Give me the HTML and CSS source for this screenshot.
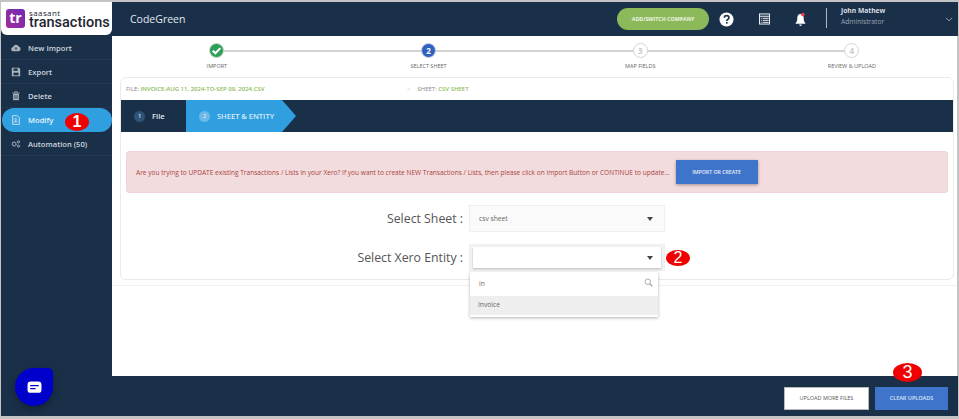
FILE: index.html
```html
<!DOCTYPE html>
<html lang="en">
<head>
    <meta charset="UTF-8">
    <title>SaasAnt Transactions</title>
    <link rel="stylesheet" href="styles.css">
</head>
<body>
    <div class="app">
        <header class="topbar">
            <div class="logo">
                <span class="logo_mark">tr</span>
                <div class="logo_text">
                    <span class="logo_small">saasant</span>
                    <span class="logo_big">transactions</span>
                </div>
            </div>
            <div class="company">CodeGreen</div>
            <button class="btn_switch">ADD/SWITCH COMPANY</button>
            <svg class="top_icon icon_help" viewBox="0 0 16 16"><circle cx="8" cy="8" r="7.5" fill="#fff"/><path d="M5.6 6.2C5.7 4.6 6.8 3.9 8.1 3.9c1.400 0 2.500.8 2.500 2.100 0 1.900-2.300 1.800-2.300 3.600" fill="none" stroke="#1a3049" stroke-width="1.700"/><rect x="7.400" y="10.600" width="1.800" height="1.800" fill="#1a3049"/></svg>
            <svg class="top_icon icon_list" viewBox="0 0 12 12"><rect x=".5" y=".5" width="11" height="11" fill="#1a3049" stroke="#fff"/><path d="M1 3h10M4 5.200h6.500M4 7.400h6.500M4 9.600h6.500M2 5.200h1M2 7.400h1M2 9.600h1" stroke="#fff" stroke-width="1"/></svg>
            <svg class="top_icon icon_bell" viewBox="0 0 12 16"><path d="M6 2C3.500 2 2.500 4 2.500 6.500c0 2.500-.5 4-1.800 5.300v.7h10.600v-.7C10 10.500 9.500 9 9.500 6.500 9.500 4 8.500 2 6 2z" fill="#fff"/><path d="M4.500 13.500a1.500 1.500 0 0 0 3 0z" fill="#fff"/><circle cx="8.500" cy="2.500" r="2" fill="#ef4150"/></svg>
            <div class="user">
                <div class="user_name">John Mathew</div>
                <div class="user_role">Administrator</div>
            </div>
            <svg class="user_arrow" viewBox="0 0 10 6"><path d="M1 1l4 3.600L9 1" fill="none" stroke="#aeb8c4" stroke-width="1"/></svg>
        </header>

        <div class="middle">
            <nav class="sidebar">
                <a class="menu_item">
                    <svg class="menu_icon" viewBox="0 0 14 12"><path d="M3.500 10.500a3 3 0 0 1-.5-6A4 4 0 0 1 10.700 4a3.300 3.300 0 0 1 0 6.500z" fill="#aab4bf"/><path d="M7 9V5.500M5.400 7L7 5.300 8.600 7" fill="none" stroke="#1a3049" stroke-width="1.100"/></svg>
                    New Import
                </a>
                <a class="menu_item">
                    <svg class="menu_icon" viewBox="0 0 12 12"><path d="M1 1h8.500L11 2.500V11H1z" fill="#aab4bf"/><rect x="3" y="1.800" width="5" height="2.800" fill="#1a3049"/><rect x="3" y="6.800" width="6" height="3.200" fill="#1a3049"/></svg>
                    Export
                </a>
                <a class="menu_item">
                    <svg class="menu_icon" viewBox="0 0 12 12"><path d="M1.500 2.500h9M4.500 2.500V1h3v1.500" fill="none" stroke="#aab4bf"/><path d="M2.500 3.500h7V11h-7z" fill="#aab4bf"/><path d="M4.500 5v4.500M6 5v4.500M7.500 5v4.500" stroke="#1a3049" stroke-width=".7"/></svg>
                    Delete
                </a>
                <a class="menu_item active">
                    <svg class="menu_icon" viewBox="0 0 12 12"><path d="M2 .8h5.500L10 3.300v7.900H2z" fill="none" stroke="#dfeaf5"/><path d="M3.800 9V7M5.500 9V5.500M7.200 9V6.500M3.500 5.500L5.500 4l2 1.500" fill="none" stroke="#dfeaf5" stroke-width=".9"/></svg>
                    Modify
                </a>
                <a class="menu_item">
                    <svg class="menu_icon" viewBox="0 0 14 12"><circle cx="4.500" cy="6" r="2.600" fill="none" stroke="#aab4bf" stroke-width="1.800" stroke-dasharray="1.500 .6"/><circle cx="10.500" cy="3" r="1.500" fill="none" stroke="#aab4bf" stroke-width="1.300"/><circle cx="10.500" cy="9" r="1.500" fill="none" stroke="#aab4bf" stroke-width="1.300"/></svg>
                    Automation (50)
                </a>
                <div class="chat_bubble">
                    <svg viewBox="0 0 14 12"><rect x=".5" y=".5" width="13" height="10.500" rx="3" fill="#fff"/><path d="M3 4.200h8M3 7h5" stroke="#0000cc" stroke-width="1.300"/></svg>
                </div>
            </nav>

            <main class="content">
                <div class="wizard">
                    <div class="steps">
                        <div class="step">
                            <div class="step_circle done">
                                <svg viewBox="0 0 12 12"><path d="M2.500 6.200l2.500 2.400 4.500-4.800" fill="none" stroke="#fff" stroke-width="2"/></svg>
                            </div>
                            <div class="step_label">IMPORT</div>
                        </div>
                        <div class="step">
                            <div class="step_circle current">2</div>
                            <div class="step_label">SELECT SHEET</div>
                        </div>
                        <div class="step">
                            <div class="step_circle">3</div>
                            <div class="step_label">MAP FIELDS</div>
                        </div>
                        <div class="step last">
                            <div class="step_circle">4</div>
                            <div class="step_label">REVIEW &amp; UPLOAD</div>
                        </div>
                    </div>

                    <section class="card">
                        <div class="crumbs">
                            <div class="crumb_file">FILE: <b>INVOICE-AUG 11, 2024-TO-SEP 09, 2024.CSV</b></div>
                            <div class="crumb_sheet"><i>&gt;</i>SHEET: <b>CSV SHEET</b></div>
                        </div>
                        <div class="tabs">
                            <div class="tab"><span class="tab_num">1</span>File</div>
                            <div class="tab tab_active"><span class="tab_num">2</span>SHEET &amp; ENTITY</div>
                        </div>
                        <div class="alert">
                            <span>Are you trying to UPDATE existing Transactions / Lists in your Xero? If you want to create NEW Transactions / Lists, then please click on Import Button or CONTINUE to update...</span>
                            <button class="btn_import">IMPORT OR CREATE</button>
                        </div>
                        <div class="form_row">
                            <label>Select Sheet :</label>
                            <div class="select">csv sheet<span class="caret"></span></div>
                        </div>
                        <div class="form_row">
                            <label>Select Xero Entity :</label>
                            <div class="select select_open">
                                <div class="select_inner"><span class="caret"></span></div>
                                <div class="dropdown">
                                    <div class="search">in
                                        <svg viewBox="0 0 12 12"><circle cx="5" cy="5" r="3.700" fill="none" stroke="#999" stroke-width="1.100"/><path d="M7.800 7.800L11 11" stroke="#999" stroke-width="1.600"/></svg>
                                    </div>
                                    <div class="option">Invoice</div>
                                </div>
                            </div>
                        </div>
                    </section>
                </div>
            </main>
        </div>

        <footer class="bottombar">
            <button class="btn_more">UPLOAD MORE FILES</button>
            <button class="btn_clear">CLEAR UPLOADS</button>
        </footer>

        <span class="marker marker_one">1</span>
        <span class="marker marker_two">2</span>
        <span class="marker marker_three">3</span>
    </div>
</body>
</html>
```

FILE: styles.css
```css
* {
    box-sizing: border-box;
}

body {
    margin: 0;
    background: #c4c4c4;
    font-family: 'Open Sans', sans-serif;
    color: #333;
}

button {
    font-family: 'Open Sans', sans-serif;
    border: none;
    cursor: pointer;
}

.app {
    position: relative;
    width: 958px;
    height: 419px;
    padding: 2px 0 3px 1px;
    display: flex;
    flex-direction: column;
    overflow: hidden;
}

/* top bar */
.topbar {
    height: 34px;
    flex: none;
    background-color: #1a3049;
    display: flex;
    align-items: center;
    color: #fff;
}

.logo {
    width: 111px;
    height: 33px;
    align-self: flex-start;
    background-color: #fff;
    border-radius: 0 0 6px 6px;
    display: flex;
    align-items: center;
    padding-left: 5px;
    gap: 4px;
}

.logo_mark {
    width: 19px;
    height: 19px;
    background: linear-gradient(45deg, #a32a9c, #6f2cb5);
    border-radius: 3px;
    color: #fff;
    font-size: 14px;
    font-weight: 700;
    line-height: 18px;
    text-align: center;
}

.logo_text {
    display: flex;
    flex-direction: column;
    color: #1d2530;
}

.logo_small {
    font-size: 8px;
    line-height: 8px;
    letter-spacing: .4px;
}

.logo_big {
    font-family: 'Roboto', sans-serif;
    font-size: 14.500px;
    font-weight: 500;
    line-height: 11px;
}

.company {
    margin-left: 18px;
    font-size: 10.500px;
    color: #e4e8ed;
    flex: 1;
}

.btn_switch {
    width: 92px;
    height: 22px;
    margin-right: 10px;
    border-radius: 11px;
    background-color: #8cb95a;
    color: #eef5e4;
    font-size: 5.300px;
    font-weight: 700;
    padding: 0;
}

.top_icon {
    flex: none;
}

.icon_help {
    width: 15px;
    height: 15px;
    margin-right: 25px;
}

.icon_list {
    width: 11px;
    height: 12px;
    margin-right: 25px;
}

.icon_bell {
    width: 11px;
    height: 15px;
    margin-right: 20px;
}

.user {
    border-left: 1px solid #aeb8c4;
    height: 20px;
    padding-left: 14px;
    width: 119px;
    margin-top: -2px;
    font-size: 6.700px;
}

.user_name {
    font-weight: 700;
    color: #d9dfe6;
    line-height: 8px;
    margin-top: -1px;
}

.user_role {
    color: #9ba6b3;
    line-height: 8px;
    margin-top: 3px;
}

.user_arrow {
    width: 8px;
    height: 5px;
    margin-right: 5px;
    flex: none;
}

/* sidebar and content */
.middle {
    flex: 1;
    display: flex;
    min-height: 0;
}

.sidebar {
    position: relative;
    width: 111px;
    flex: none;
    background-color: #1a3049;
}

.menu_item {
    height: 24px;
    display: flex;
    align-items: center;
    padding-left: 10px;
    gap: 7px;
    font-size: 7.600px;
    font-weight: 600;
    color: #cdd5de;
    border-bottom: 1px solid #22384f;
}

.menu_item.active {
    margin-left: 1px;
    padding-left: 9px;
    background-color: #2f9fe0;
    border-radius: 12px;
    color: #e6f3fb;
    border-bottom: none;
}

.menu_icon {
    width: 10px;
    height: 10px;
    flex: none;
}

.chat_bubble {
    position: absolute;
    left: 14px;
    bottom: -30px;
    width: 38px;
    height: 38px;
    border-radius: 19px 5px 19px 19px;
    background-color: #0000cc;
    box-shadow: 0 3px 6px rgba(0, 0, 0, .3);
    display: flex;
    align-items: center;
    justify-content: center;
}

.chat_bubble svg {
    width: 15px;
    height: 13px;
}

.content {
    flex: 1;
    min-width: 0;
    background-color: #fff;
    border-right: 1px solid #c4c4c4;
}

.wizard {
    height: 250px;
    padding: 0 3px 0 8px;
    border-bottom: 1px solid #f1f1f1;
}

/* progress steps */
.steps {
    height: 41px;
    display: grid;
    grid-template-columns: repeat(4, 211.700px);
    margin-left: -9px;
}

.step {
    position: relative;
    display: flex;
    flex-direction: column;
    align-items: center;
    padding-top: 7px;
}

.step::after {
    content: '';
    position: absolute;
    top: 14px;
    left: 50%;
    width: 100%;
    height: 2px;
    background-color: #d2d2d2;
}

.step.last::after {
    display: none;
}

.step_circle {
    position: relative;
    z-index: 1;
    width: 15px;
    height: 15px;
    border-radius: 50%;
    background-color: #fff;
    border: 1px solid #d5d5d5;
    color: #c9c9c9;
    font-size: 8px;
    font-weight: 700;
    line-height: 13px;
    text-align: center;
}

.step_circle.done {
    background-color: #2e9e57;
    border: 1px solid #c9d8cd;
}

.step_circle.done svg {
    display: block;
    width: 13px;
    height: 13px;
}

.step_circle.current {
    background-color: #2f62bd;
    border-color: #c9d3e8;
    color: #fff;
}

.step_label {
    margin-top: 4px;
    font-size: 5.500px;
    color: #666;
    line-height: 8px;
}

/* main card */
.card {
    height: 203px;
    border: 1px solid #eaeaea;
    border-radius: 6px;
    position: relative;
}

.crumbs {
    height: 22px;
    display: flex;
    align-items: center;
    padding-left: 5px;
    font-size: 6px;
    color: #888;
}

.crumbs b {
    font-weight: 600;
    color: #8cb95a;
}

.crumb_file {
    width: 281px;
}

.crumb_sheet i {
    font-style: normal;
    color: #bbb;
    margin-right: 7px;
}

.tabs {
    height: 32px;
    background-color: #1a3049;
    display: flex;
}

.tab {
    width: 65px;
    display: flex;
    align-items: center;
    padding-left: 13px;
    font-size: 7.600px;
    font-weight: 600;
    color: #e2e7ec;
}

.tab_active {
    position: relative;
    width: 96px;
    background-color: #2f9fe0;
    font-size: 7.500px;
    color: #d8ecf8;
}

.tab_active::after {
    content: '';
    position: absolute;
    left: 100%;
    top: 0;
    border-left: 14px solid #2f9fe0;
    border-top: 16px solid transparent;
    border-bottom: 16px solid transparent;
}

.tab_num {
    width: 11px;
    height: 11px;
    border-radius: 50%;
    background-color: #2f5379;
    color: #dfe6ee;
    font-size: 5.500px;
    line-height: 11px;
    text-align: center;
    margin-right: 7px;
}

.tab_active .tab_num {
    background-color: #6bb9e8;
}

.alert {
    margin: 19px 5px 12px 5px;
    height: 42px;
    display: flex;
    align-items: center;
    padding-left: 9px;
    background-color: #f3dcde;
    border: 1px solid #f0d4d7;
    border-radius: 3px;
    font-size: 6.570px;
    color: #a94442;
}

.btn_import {
    width: 82px;
    height: 24px;
    margin-left: 6px;
    flex: none;
    background-color: #3f74cb;
    color: #e8eff9;
    font-size: 5.200px;
    font-weight: 600;
    padding: 0;
    box-shadow: 0 1px 3px rgba(0, 0, 0, .35);
}

.form_row {
    display: flex;
    align-items: center;
    height: 27px;
    margin-bottom: 12px;
}

.form_row label {
    width: 342px;
    text-align: right;
    font-size: 12.300px;
    color: #555;
    margin-right: 6px;
}

.select {
    position: relative;
    width: 196px;
    height: 27px;
    padding-left: 9px;
    line-height: 26px;
    background-color: #fafafa;
    border: 1px solid #efefef;
    font-size: 6.700px;
    color: #666;
}

.caret {
    position: absolute;
    top: 11px;
    right: 11px;
    border-top: 4px solid #444;
    border-left: 3px solid transparent;
    border-right: 3px solid transparent;
}

.select_open {
    background-color: #f3f3f3;
    padding: 2px 3px;
}

.select_inner {
    position: relative;
    height: 21px;
    background-color: #fff;
    box-shadow: 0 1px 2px rgba(0, 0, 0, .25);
}

.select_inner .caret {
    top: 9px;
    right: 8px;
}

.dropdown {
    position: absolute;
    z-index: 2;
    top: 27px;
    left: 0;
    width: 188px;
    height: 45px;
    background-color: #fff;
    box-shadow: 0 1px 3px rgba(0, 0, 0, .3);
}

.search {
    position: relative;
    height: 24px;
    padding-left: 9px;
    line-height: 24px;
}

.search svg {
    position: absolute;
    top: 6px;
    right: 5px;
    width: 9px;
    height: 9px;
}

.option {
    height: 19px;
    padding-left: 8px;
    line-height: 18px;
    background-color: #eeeeee;
}

/* bottom bar */
.bottombar {
    height: 40px;
    flex: none;
    background-color: #1a3049;
    display: flex;
    align-items: center;
    justify-content: flex-end;
    padding: 4px 10px 0 0;
    gap: 6px;
}

.bottombar button {
    height: 23px;
    font-size: 5.500px;
    padding: 0;
}

.btn_more {
    width: 85px;
    background-color: #fff;
    border: 1px solid #b9b9b9;
    color: #555;
}

.btn_clear {
    width: 73px;
    background-color: #3f74cb;
    color: #dce6f6;
    font-weight: 600;
}

/* numbered callouts */
.marker {
    position: absolute;
    width: 24px;
    height: 16px;
    border-radius: 50%;
    background-color: #f00000;
    color: #fff;
    font-family: 'Liberation Sans', sans-serif;
    font-size: 16px;
    line-height: 16px;
    text-align: center;
}

.marker_one {
    left: 65px;
    top: 113px;
    height: 18px;
    line-height: 18px;
    font-weight: 700;
}

.marker_two {
    left: 666px;
    top: 250px;
}

.marker_three {
    left: 893px;
    top: 363px;
    width: 29px;
    height: 19px;
    font-size: 18px;
    line-height: 19px;
}
```
